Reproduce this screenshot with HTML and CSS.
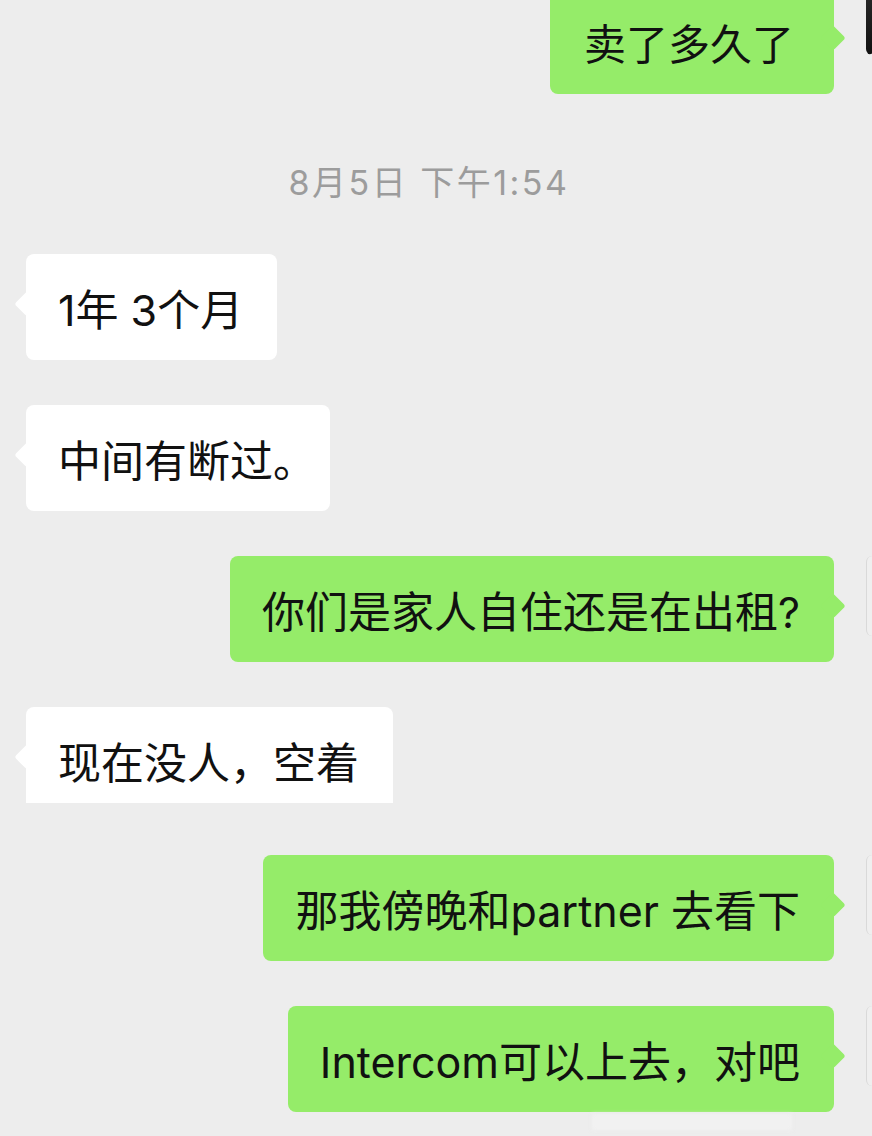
FILE: index.html
```html
<!DOCTYPE html>
<html lang="zh-CN">

<head>
    <meta charset="UTF-8">
    <meta name="viewport" content="width=device-width, initial-scale=1.0">
    <title>聊天记录</title>

    <link rel="stylesheet" href="styles.css">
</head>

<body>
    <div class="chat">
        <div class="row me first">
            <div class="bubble green">卖了多久了</div>
            <div class="avatar dark"></div>
        </div>

        <div class="time">8月5日 下午1:54</div>

        <div class="row">
            <div class="bubble white">1年&nbsp;3个月</div>
        </div>

        <div class="row">
            <div class="bubble white stop">中间有断过。</div>
        </div>

        <div class="row me">
            <div class="bubble green">你们是家人自住还是在出租?</div>
            <div class="avatar light"></div>
        </div>

        <div class="row cut">
            <div class="bubble white">现在没人，空着</div>
        </div>

        <div class="row me">
            <div class="bubble green">那我傍晚和partner 去看下</div>
            <div class="avatar light"></div>
        </div>

        <div class="row me">
            <div class="bubble green">Intercom可以上去，对吧</div>
            <div class="avatar light"></div>
        </div>
    </div>

    <div class="mark"></div>
</body>

</html>
```

FILE: styles.css
```css
* {
    margin: 0;
    padding: 0;
    box-sizing: border-box
}

html,
body {
    width: 872px;
    height: 1136px;
    overflow: hidden;
    background: #ededed;
}

body {
    position: relative;
    font-family: "Inter", "Noto Sans CJK SC", sans-serif;
    color: #111;
}

.chat {
    width: 872px;
    margin-top: -12px;
    overflow: hidden;
}

.row {
    display: flex;
    align-items: flex-start;
    padding-left: 26px;
    margin-bottom: 45px;
}

/* 右侧消息：头像只露出一条边 */
.row.me {
    width: 952px;
    justify-content: flex-end;
    padding-left: 0;
    padding-right: 6px;
    gap: 32px;
}

.bubble {
    position: relative;
    display: flex;
    align-items: center;
    height: 106px;
    padding: 0 34px 0 32px;
    font-size: 43px;
    border-radius: 8px;
    white-space: nowrap;
}

.bubble::after {
    content: "";
    position: absolute;
    top: 41px;
    width: 18px;
    height: 18px;
    border-radius: 3px;
    transform: rotate(45deg);
}

.white {
    background: #fff;
}

.white::after {
    left: -8px;
    background: #fff;
}

.green {
    background: #95ec69;
}

.green::after {
    right: -8px;
    background: #95ec69;
}

.first .bubble {
    font-size: 42px;
    padding-left: 34px;
    padding-right: 40px;
}

/* 句号占位偏宽，收一点右边距 */
.bubble.stop {
    padding-right: 14px;
}

.row.cut {
    margin-bottom: 52px;
}

.cut .bubble {
    height: 96px;
    padding-top: 10px;
    border-radius: 8px 8px 0 0;
}

.avatar {
    width: 80px;
    height: 80px;
    flex-shrink: 0;
    border-radius: 6px;
}

.avatar.dark {
    height: 67px;
    background: linear-gradient(160deg, #2a2a2a 0%, #111 70%, #ededed 71%);
}

.avatar.light {
    background: #efefef;
    border-left: 1px solid #d9d9d9;
}

.time {
    height: 40px;
    margin: 69px 0 51px;
    padding-right: 14px;
    line-height: 40px;
    text-align: center;
    font-size: 34px;
    letter-spacing: 2.5px;
    color: #9c9c9c;
}

.mark {
    position: absolute;
    left: 592px;
    top: 1114px;
    width: 200px;
    height: 16px;
    background: #f1f1f1;
    filter: blur(2px);
}
```
